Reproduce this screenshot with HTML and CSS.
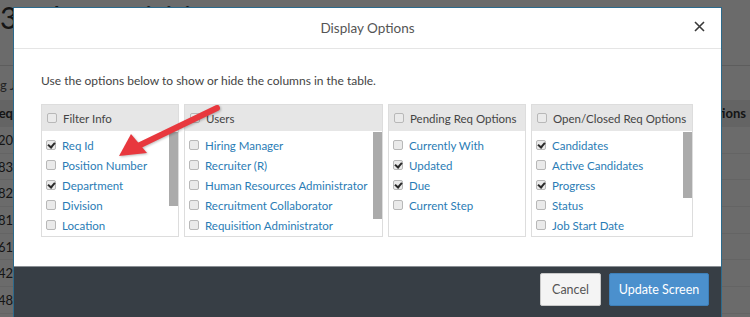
FILE: index.html
```html
<!DOCTYPE html>
<html lang="en">

<head>
    <meta charset="utf-8">
    <meta name="viewport" content="width=device-width, initial-scale=1.0">
    <title>Display Options</title>
    <link rel="stylesheet" href="styles.css">
</head>

<body>

    <div class="page">
        <h1 class="page-title">3 Job Requisitions</h1>
        <div class="toolbar"><span>Showing Jobs</span></div>
        <div class="table">
            <div class="row head"><span class="c-id">Req</span><span></span><span class="c-act">Actions</span></div>
            <div class="row"><span class="c-id">2720</span><span></span><span></span></div>
            <div class="row"><span class="c-id">2683</span><span></span><span></span></div>
            <div class="row"><span class="c-id">2682</span><span></span><span></span></div>
            <div class="row"><span class="c-id">2681</span><span></span><span></span></div>
            <div class="row"><span class="c-id">2661</span><span></span><span></span></div>
            <div class="row"><span class="c-id">2642</span><span></span><span></span></div>
            <div class="row"><span class="c-id">2648</span><span></span><span></span></div>
        </div>
    </div>

    <div class="overlay"></div>

    <div class="modal">
        <div class="modal-head">
            <h2>Display Options</h2>
            <button class="close" aria-label="Close">
                <svg width="11" height="11" viewBox="0 0 11 11"><path d="M1 1L10 10M10 1L1 10" stroke="#3a3a3a" stroke-width="1.6" fill="none"/></svg>
            </button>
        </div>

        <div class="modal-body">
            <p class="intro">Use the options below to show or hide the columns in the table.</p>

            <div class="groups">
                <section class="group">
                    <div class="group-head"><span class="cb"></span>Filter Info</div>
                    <ul class="group-list">
                        <li><span class="cb on"></span>Req Id</li>
                        <li><span class="cb"></span>Position Number</li>
                        <li><span class="cb on"></span>Department</li>
                        <li><span class="cb"></span>Division</li>
                        <li><span class="cb"></span>Location</li>
                    </ul>
                    <span class="thumb t1"></span>
                </section>

                <section class="group">
                    <div class="group-head"><span class="cb"></span>Users</div>
                    <ul class="group-list">
                        <li><span class="cb"></span>Hiring Manager</li>
                        <li><span class="cb"></span>Recruiter (R)</li>
                        <li><span class="cb"></span>Human Resources Administrator</li>
                        <li><span class="cb"></span>Recruitment Collaborator</li>
                        <li><span class="cb"></span>Requisition Administrator</li>
                    </ul>
                    <span class="thumb t2"></span>
                </section>

                <section class="group">
                    <div class="group-head"><span class="cb"></span>Pending Req Options</div>
                    <ul class="group-list">
                        <li><span class="cb"></span>Currently With</li>
                        <li><span class="cb on"></span>Updated</li>
                        <li><span class="cb on"></span>Due</li>
                        <li><span class="cb"></span>Current Step</li>
                    </ul>
                </section>

                <section class="group">
                    <div class="group-head"><span class="cb"></span>Open/Closed Req Options</div>
                    <ul class="group-list">
                        <li><span class="cb on"></span>Candidates</li>
                        <li><span class="cb"></span>Active Candidates</li>
                        <li><span class="cb on"></span>Progress</li>
                        <li><span class="cb"></span>Status</li>
                        <li><span class="cb"></span>Job Start Date</li>
                    </ul>
                    <span class="thumb t4"></span>
                </section>
            </div>
        </div>

        <div class="modal-foot">
            <button class="btn">Cancel</button>
            <button class="btn primary">Update Screen</button>
        </div>
    </div>

    <svg class="arrow" width="750" height="317" viewBox="0 0 750 317">
        <line x1="217" y1="108" x2="136" y2="147" stroke="#e8383e" stroke-width="6" stroke-linecap="round"/>
        <polygon points="119,156 131,134 147,153" fill="#e8383e"/>
    </svg>

</body></html>
```

FILE: styles.css
```css
body {
    margin: 0;
    width: 750px;
    height: 317px;
    overflow: hidden;
    font-family: 'Lato', 'Open Sans', sans-serif;
    background: #fff;
    color: #333;
}

/* page behind the dialog */

.page-title {
    height: 66px;
    margin: 0;
    font-size: 30px;
    font-weight: 400;
    line-height: 34px;
    border-bottom: 1px solid #ddd;
    box-sizing: border-box;
}

.toolbar {
    height: 34px;
    line-height: 38px;
    font-size: 13px;
    color: #555;
}

.toolbar span {
    margin-left: -42px;
}

.row {
    display: grid;
    grid-template-columns: 13px 1fr 48px;
    height: 26.7px;
    align-items: center;
    font-size: 13px;
    border-bottom: 1px solid #eee;
    box-sizing: border-box;
}

.row.head {
    height: 27px;
    background: #eee;
    font-weight: 700;
}

.c-id {
    display: flex;
    justify-content: flex-end;
    white-space: nowrap;
}

.c-act {
    white-space: nowrap;
}

.overlay {
    position: fixed;
    top: 0;
    left: 0;
    width: 100vw;
    height: 100vh;
    background: rgba(0, 0, 0, .58);
}

/* dialog */

.modal {
    position: absolute;
    left: 13px;
    top: 7px;
    width: 709px;
    height: 312px;
    box-sizing: border-box;
    border: 1px solid #2c6a8c;
    background: #fff;
    display: flex;
    flex-direction: column;
}

.modal-head {
    height: 41px;
    flex: none;
    box-sizing: border-box;
    border-bottom: 1px solid #e5e5e5;
    display: flex;
    align-items: center;
    justify-content: center;
    position: relative;
}

.modal-head h2 {
    margin: 0;
    font-size: 13.5px;
    font-weight: 400;
    color: #555;
}

.close {
    position: absolute;
    right: 16px;
    top: 13px;
    border: 0;
    background: none;
    padding: 0;
    line-height: 0;
}

.modal-body {
    flex: none;
    height: 217px;
    box-sizing: border-box;
    padding: 24px 27px 0;
}

.intro {
    margin: 0 0 15px;
    font-size: 12px;
    line-height: 16px;
    color: #444;
}

.groups {
    display: grid;
    grid-template-columns: 138px 199px 138px 162px;
    column-gap: 5px;
}

.group {
    position: relative;
    height: 133px;
    box-sizing: border-box;
    border: 1px solid #ddd;
    overflow: hidden;
}

.group-head {
    height: 26px;
    background: #e6e6e6;
    display: flex;
    align-items: center;
    padding-left: 5px;
    font-size: 11.5px;
    color: #444;
    white-space: nowrap;
}

.group-list {
    list-style: none;
    margin: 0;
    padding: 4px 0 0 4px;
}

.group-list li {
    height: 20px;
    display: flex;
    align-items: center;
    font-size: 11.5px;
    color: #2a7cb5;
    white-space: nowrap;
}

.cb {
    position: relative;
    flex: none;
    width: 10px;
    height: 10px;
    margin-right: 6px;
    box-sizing: border-box;
    border: 1px solid #b8b8b8;
    border-radius: 2px;
    background: #eaeaea;
}

.cb.on::after {
    content: "";
    position: absolute;
    left: 2px;
    top: 0;
    width: 3px;
    height: 5px;
    border: solid #2a2a2a;
    border-width: 0 2px 2px 0;
    transform: rotate(40deg);
}

.thumb {
    position: absolute;
    right: 0;
    top: 27px;
    width: 9px;
    background: #ababab;
}

.t1 {
    height: 74px;
}

.t2 {
    height: 87px;
}

.t4 {
    height: 66px;
}

.modal-foot {
    flex: 1;
    background: #373e45;
    border-top: 1px solid #8a8f94;
    display: flex;
    justify-content: flex-end;
    align-items: flex-start;
    gap: 8px;
    padding: 6px 12px 0;
}

.btn {
    height: 33px;
    padding: 0 11px;
    font-family: 'Lato', 'Open Sans', sans-serif;
    font-size: 12.5px;
    white-space: nowrap;
    border: 1px solid #c8c8c8;
    border-radius: 2px;
    background: #f4f4f4;
    color: #555;
}

.btn.primary {
    width: 100px;
    padding: 0;
    background: #4b90cd;
    border-color: #3d7fb9;
    color: #fff;
}

.arrow {
    position: absolute;
    left: 0;
    top: 0;
    pointer-events: none;
    filter: drop-shadow(1px 1px 1px rgba(0, 0, 0, .25));
}
```
